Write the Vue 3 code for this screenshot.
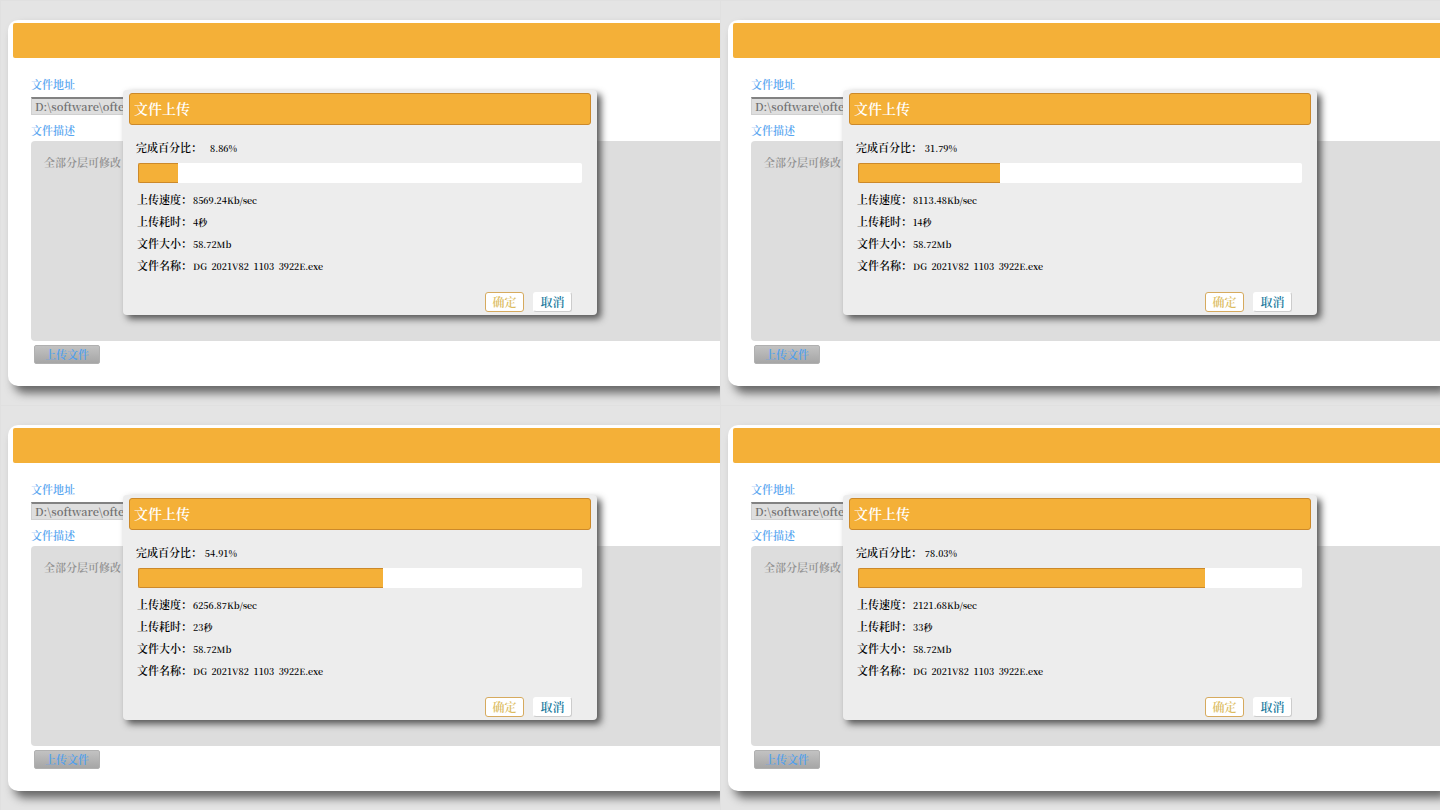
<script setup>
import { ref } from 'vue'

const panels = ref([
  { id: 1, percent: 8.86, speed: '8569.24Kb/sec', time: '4秒' },
  { id: 2, percent: 31.79, speed: '8113.48Kb/sec', time: '14秒' },
  { id: 3, percent: 54.91, speed: '6256.87Kb/sec', time: '23秒' },
  { id: 4, percent: 78.03, speed: '2121.68Kb/sec', time: '33秒' },
].map((p) => ({
  ...p,
  path: 'D:\\software\\often',
  description: '全部分层可修改',
  size: '58.72Mb',
  name: 'DG  2021V82  1103  3922E.exe',
})))
</script>

<template>
  <main class="board">
    <section v-for="p in panels" :key="p.id" class="panel">
      <div class="card">
        <header class="banner"></header>
        <form class="form" @submit.prevent>
          <label class="label" :for="'path-' + p.id">文件地址</label>
          <input :id="'path-' + p.id" v-model="p.path" class="path" type="text" />
          <label class="label" :for="'desc-' + p.id">文件描述</label>
          <textarea :id="'desc-' + p.id" v-model="p.description" class="desc"></textarea>
          <button class="upload" type="button">上传文件</button>
        </form>
      </div>

      <div class="dialog" role="dialog" :aria-labelledby="'title-' + p.id">
        <h2 :id="'title-' + p.id" class="title">文件上传</h2>
        <div class="body">
          <p class="percent"><span>完成百分比：</span><span class="number">{{ p.percent }}%</span></p>
          <div class="track" role="progressbar" :aria-valuenow="p.percent" aria-label="完成百分比">
            <div class="fill" :style="{ width: p.percent + '%' }"></div>
          </div>
          <dl class="facts">
            <div class="fact"><dt>上传速度：</dt><dd>{{ p.speed }}</dd></div>
            <div class="fact"><dt>上传耗时：</dt><dd>{{ p.time }}</dd></div>
            <div class="fact"><dt>文件大小：</dt><dd>{{ p.size }}</dd></div>
            <div class="fact"><dt>文件名称：</dt><dd>{{ p.name }}</dd></div>
          </dl>
        </div>
        <footer class="actions">
          <button class="btn confirm" type="button">确定</button>
          <button class="btn cancel" type="button">取消</button>
        </footer>
      </div>
    </section>
  </main>
</template>

<style>
body {
  background: #e4e4e4;
}
</style>

<style scoped>
.board,
.board * {
  box-sizing: border-box;
}

.board {
  display: grid;
  grid-template-columns: repeat(2, minmax(0, 1fr));
  min-height: 100vh;
  font-family: "Noto Serif CJK SC", "Liberation Serif", "Noto Sans CJK SC", serif;
  font-size: 11px;
  font-weight: 600;
  line-height: 22px;
  color: #000;
}

.board button,
.board input,
.board textarea {
  font-family: inherit;
  font-weight: inherit;
}

.panel {
  position: relative;
  overflow: hidden;
  padding: 19px 0 19px 7px;
  border-top: 1px solid #e0e0e0;
  border-left: 1px solid #e0e0e0;
  background: #e4e4e4;
}

.card {
  height: 100%;
  padding: 3px 0 20px 5px;
  border-radius: 10px 0 0 10px;
  background: #fff;
  box-shadow: 6px 7px 10px 0 #666;
}

.banner {
  height: 35px;
  border-radius: 2px 0 0 2px;
  background: #f4b038;
}

.form {
  display: flex;
  flex-direction: column;
  align-items: flex-start;
  padding: 15px 0 0 18px;
}

.label {
  color: #5aa6f0;
}

.path {
  width: 240px;
  height: 18px;
  margin: 2px 0 4px;
  padding: 0 3px 2px;
  border: 1px solid #d0d0d0;
  border-top: 2px solid #828282;
  background: #dedede;
  color: #707070;
  font-size: 11px;
  line-height: 13px;
}

.desc {
  display: block;
  width: 100%;
  height: 200px;
  padding: 10px 13px;
  border: 0;
  border-radius: 4px 0 0 4px;
  resize: none;
  background: #ddd;
  color: #909090;
  font-size: 11px;
  line-height: 22px;
}

.upload {
  width: 66px;
  height: 19px;
  margin: 4px 0 0 3px;
  padding: 0;
  border: 1px solid #b0b0b0;
  border-radius: 2px;
  background: linear-gradient(#c2c2c2, #a6a6a6);
  color: #4fa0ee;
  font-size: 11px;
  line-height: 17px;
}

.dialog {
  position: absolute;
  top: 89px;
  left: 122px;
  width: 474px;
  padding: 3px 6px;
  border-radius: 4px;
  background: #ededed;
  box-shadow: 4px 4px 7px 0 #555;
}

.title {
  margin: 0;
  padding: 0 4px 2px;
  border: 1px solid #cc892a;
  border-radius: 3px;
  background: #f4b038;
  color: #fff;
  font-size: 14px;
  font-weight: 600;
  line-height: 28px;
}

.body {
  padding: 11px 9px 0 7px;
}

.percent {
  display: flex;
  align-items: baseline;
  height: 22px;
  margin: 0 0 5px;
}

.number {
  width: 35px;
  font-size: 9px;
  text-align: right;
}

.track {
  height: 20px;
  margin-left: 2px;
  border-radius: 2px;
  background: #fff;
}

.track .fill {
  box-sizing: content-box;
  height: 18px;
  border: 1px solid #cc892a;
  border-right: 0;
  border-radius: 2px 0 0 2px;
  background: #f4b038;
}

.facts {
  margin: 5px 0 0 1px;
}

.fact {
  display: flex;
  align-items: baseline;
  height: 22px;
}

.fact dd {
  margin: 0 0 0 1px;
  font-size: 9px;
  white-space: pre;
}

.actions {
  display: flex;
  justify-content: flex-end;
  gap: 9px;
  padding: 16px 19px 0 0;
}

.btn {
  width: 39px;
  height: 20px;
  padding: 0;
  border: 1px solid #fff;
  border-radius: 3px;
  background: #fff;
  font-size: 12px;
  line-height: 18px;
}

.confirm {
  border-color: #d6aa5e;
  color: #dcbc60;
}

.cancel {
  border-right-color: #ccc;
  border-bottom-color: #ccc;
  color: #16789c;
}
</style>
